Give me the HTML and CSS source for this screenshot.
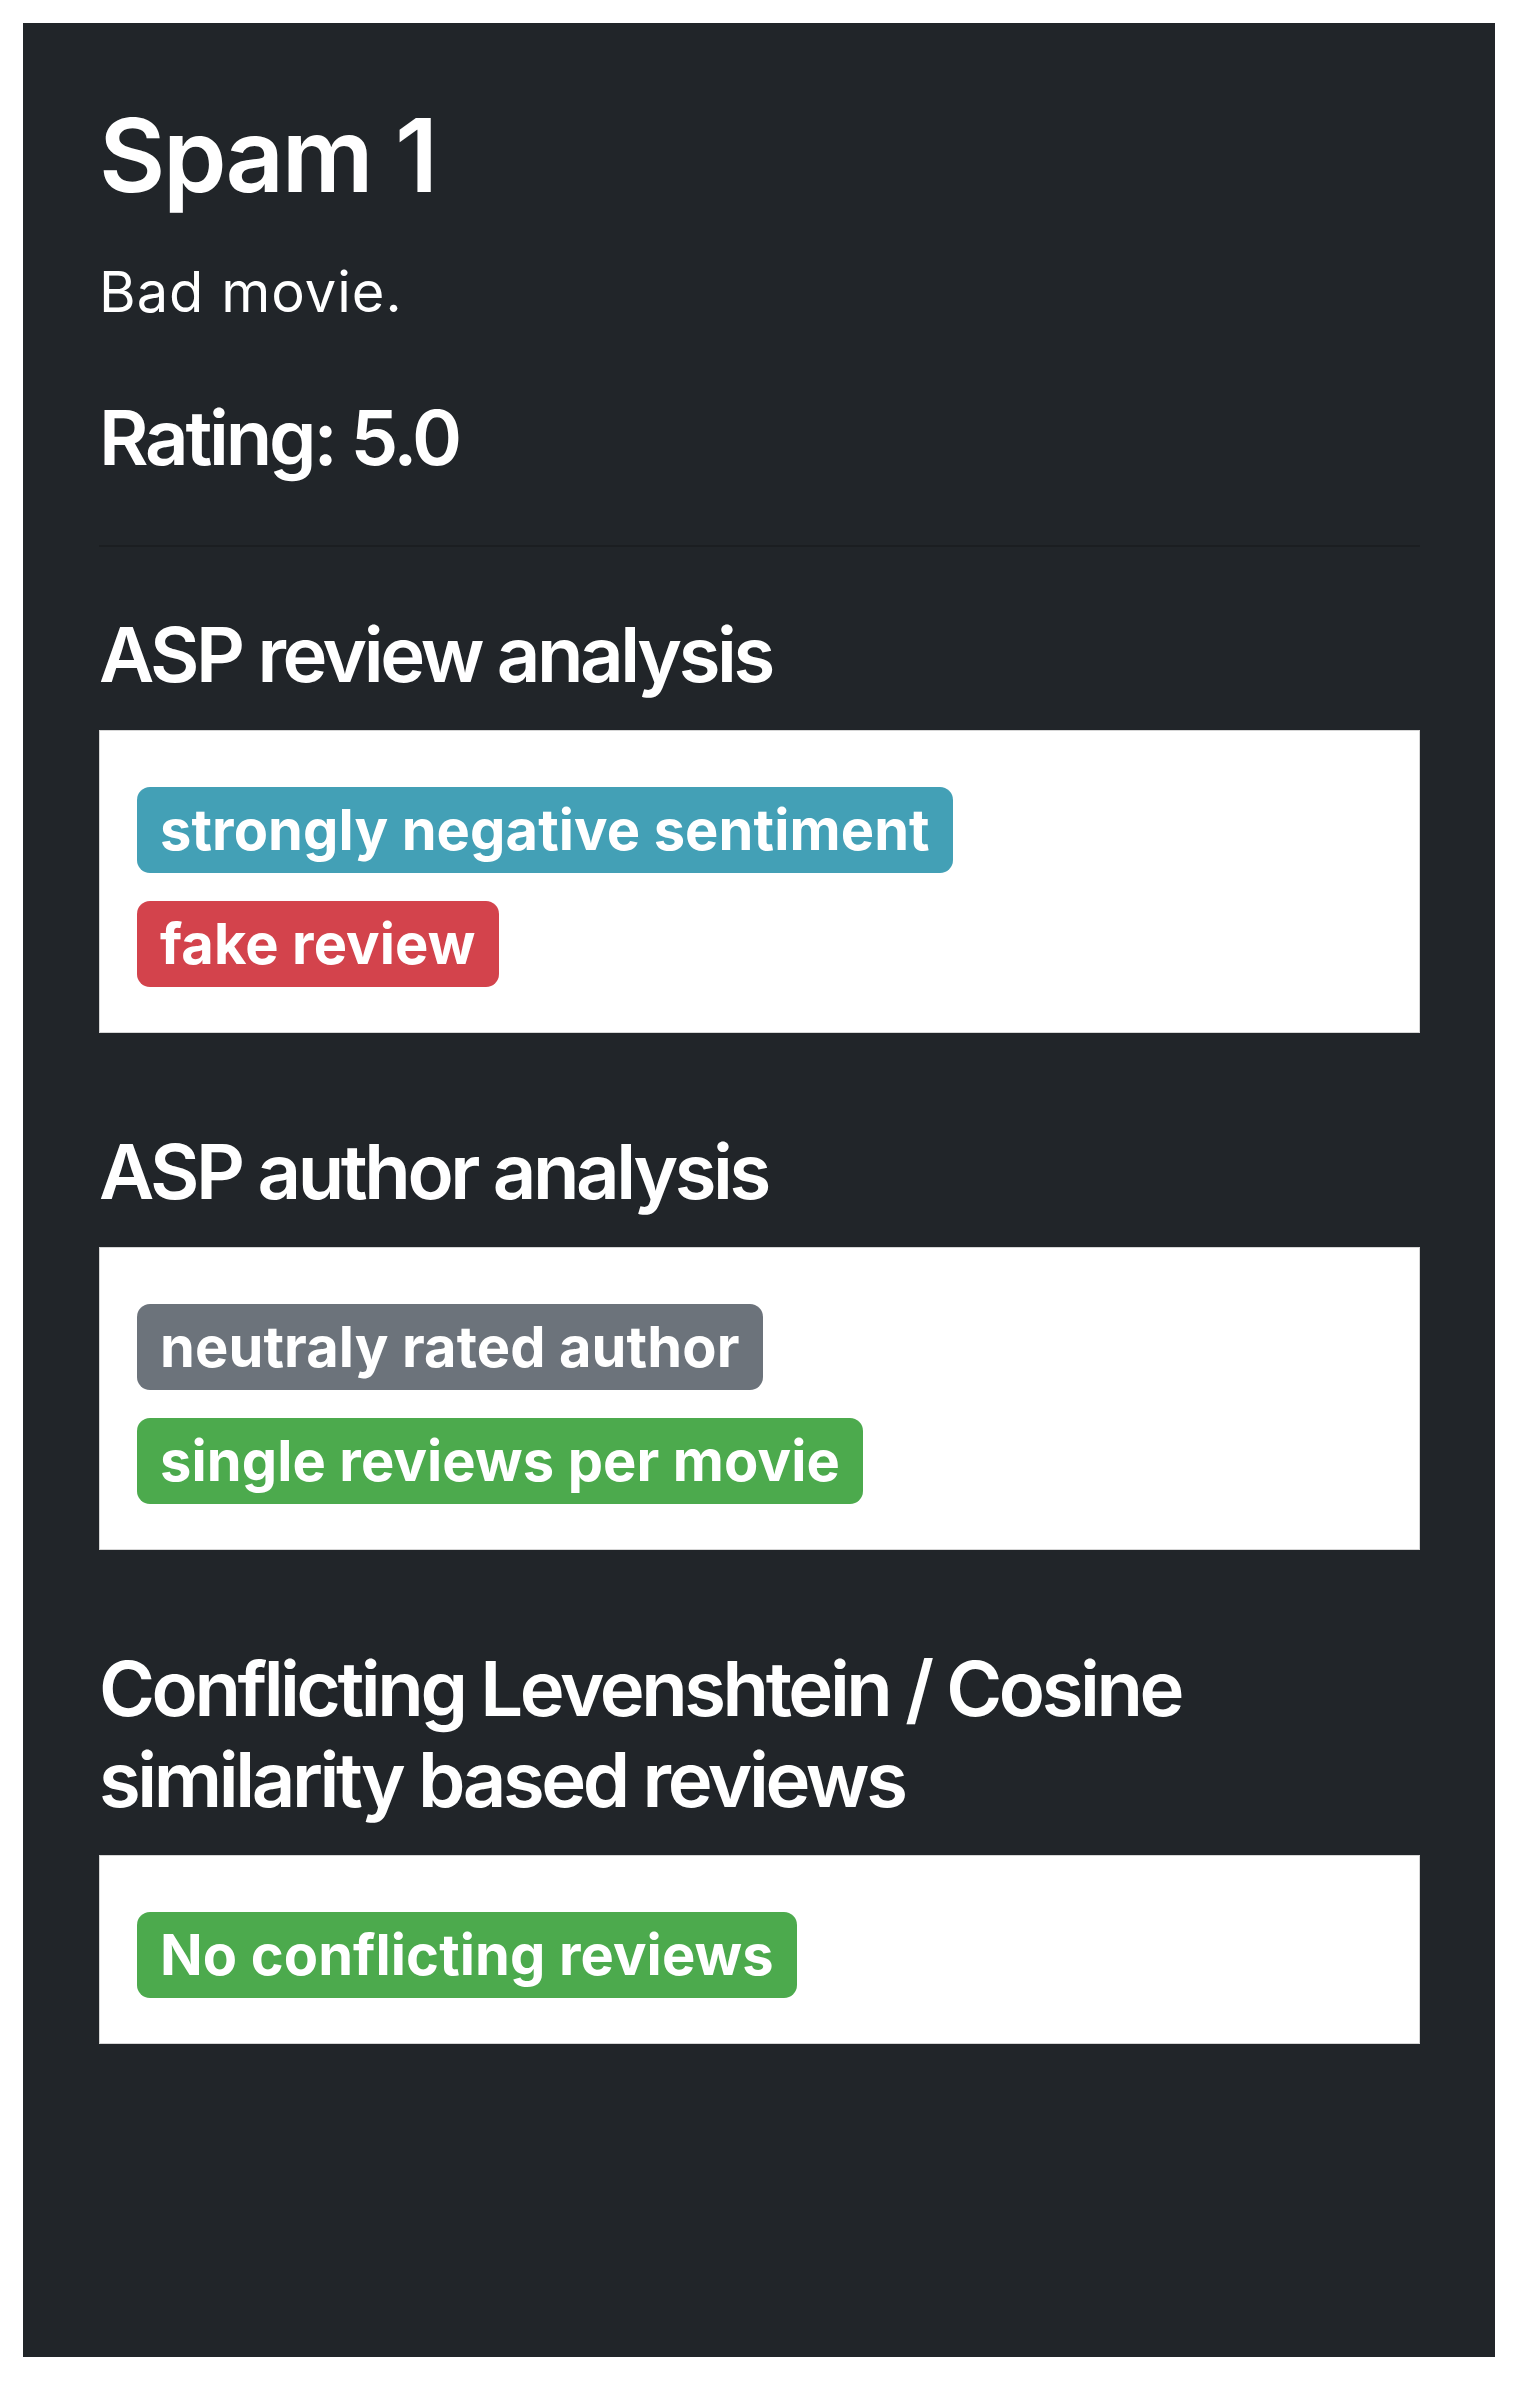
FILE: index.html
```html
<!DOCTYPE html>
<html lang="en">
<head>
<meta charset="utf-8">
<title>Spam 1</title>
<link rel="stylesheet" href="styles.css">
</head>
<body>
<div class="card">
  <h1 class="title">Spam 1</h1>
  <p class="text">Bad movie.</p>
  <h3 class="heading rating">Rating: 5.0</h3>
  <hr class="divider">
  <section class="section">
    <h3 class="heading">ASP review analysis</h3>
    <div class="box">
      <span class="badge badge-info">strongly negative sentiment</span>
      <span class="badge badge-danger">fake review</span>
    </div>
  </section>
  <section class="section">
    <h3 class="heading">ASP author analysis</h3>
    <div class="box">
      <span class="badge badge-secondary">neutraly rated author</span>
      <span class="badge badge-success">single reviews per movie</span>
    </div>
  </section>
  <section class="section">
    <h3 class="heading">Conflicting Levenshtein / Cosine similarity based reviews</h3>
    <div class="box">
      <span class="badge badge-success">No conflicting reviews</span>
    </div>
  </section>
</div>
</body>
</html>
```
FILE: styles.css
```css
html, body {
  background: #ffffff;
}
body {
  margin: 23px;
  font-family: Inter, "Noto Sans", "Liberation Sans", sans-serif;
}
.card {
  box-sizing: border-box;
  width: 1472px;
  height: 2334px;
  padding: 71px 75px 0 76px;
  background: #212529;
  color: #ffffff;
}
.title {
  margin: 0;
  font-size: 102px;
  line-height: 122px;
  font-weight: 600;
  letter-spacing: -0.022em;
}
.text {
  margin: 35px 0 0;
  font-size: 56px;
  line-height: 82px;
  font-weight: 400;
  letter-spacing: 0.018em;
}
.heading {
  margin: 0 0 30px;
  font-size: 76px;
  line-height: 91px;
  font-weight: 600;
  letter-spacing: -0.045em;
}
.rating {
  margin: 59px 0 0;
  letter-spacing: -0.042em;
}
.divider {
  margin: 62px 0 62px;
  border: 0;
  border-top: 2px solid rgba(0, 0, 0, 0.18);
  height: 0;
}
.section + .section {
  margin-top: 93px;
}
.box {
  display: flex;
  flex-direction: column;
  align-items: flex-start;
  gap: 28px;
  padding: 56px 37px 45px;
  background: #ffffff;
  border: 1px solid #d6d6d6;
}
.badge {
  display: inline-block;
  padding: 14px 23px;
  font-size: 56px;
  line-height: 58px;
  font-weight: 700;
  color: #ffffff;
  border-radius: 13px;
  white-space: nowrap;
  letter-spacing: 0.002em;
}
.badge-info { background: #43a0b6; }
.badge-danger { background: #d3434c; }
.badge-secondary { background: #6c737b; }
.badge-success { background: #4caa4d; }
```
